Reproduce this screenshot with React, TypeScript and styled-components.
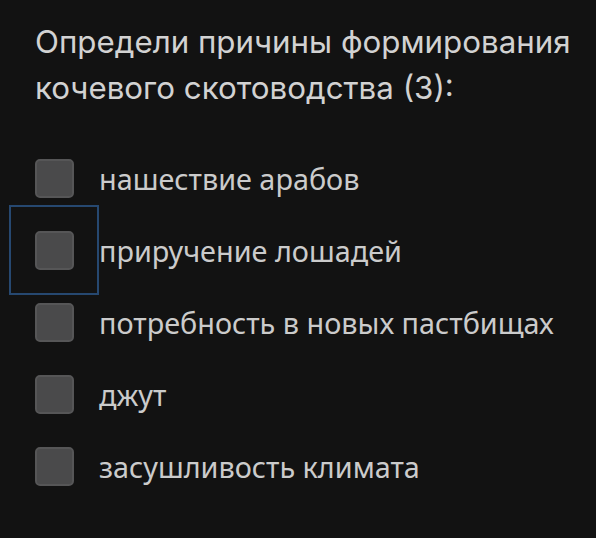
import styled, { createGlobalStyle } from "styled-components";

const GlobalStyle = createGlobalStyle`
  html, body {
    margin: 0;
    padding: 0;
    background: #121212;
  }
`;

const options = [
  { label: "нашествие арабов", focused: false },
  { label: "приручение лошадей", focused: true },
  { label: "потребность в новых пастбищах", focused: false },
  { label: "джут", focused: false },
  { label: "засушливость климата", focused: false },
];

export default function App() {
  return (
    <>
      <GlobalStyle />
      <Page>
        <Question>
          Определи причины формирования
          <br />
          кочевого скотоводства (3):
        </Question>
        <List>
          {options.map((o) => (
            <Row key={o.label}>
              <BoxCell $focused={o.focused}>
                <Box />
              </BoxCell>
              <Label>{o.label}</Label>
            </Row>
          ))}
        </List>
      </Page>
    </>
  );
}

const Page = styled.div`
  width: 596px;
  height: 538px;
  background: #121212;
  padding-top: 19px;
  box-sizing: border-box;
  overflow: hidden;
`;

const Question = styled.div`
  padding-left: 35px;
  font-family: Inter, "Noto Sans", sans-serif;
  font-size: 31.3px;
  line-height: 46px;
  color: #d2d2d2;
`;

const List = styled.div`
  margin-top: 31px;
  display: flex;
  flex-direction: column;
`;

const Row = styled.div`
  display: flex;
  align-items: center;
  height: 72px;
`;

const BoxCell = styled.div<{ $focused: boolean }>`
  position: relative;
  width: 90px;
  margin-left: 9px;
  height: 72px;
  display: flex;
  align-items: center;
  justify-content: center;

  &::after {
    content: "";
    display: ${(p) => (p.$focused ? "block" : "none")};
    position: absolute;
    left: 0;
    top: -9px;
    width: 90px;
    height: 90px;
    box-sizing: border-box;
    border: 2px solid #264870;
  }
`;

const Box = styled.div`
  width: 39px;
  height: 39px;
  box-sizing: border-box;
  border-radius: 5px;
  background: #4a4a4b;
  border: 2px solid #565657;
`;

const Label = styled.div`
  font-family: "Noto Sans", "Open Sans", sans-serif;
  font-size: 28.8px;
  color: #cbcbcb;
  white-space: nowrap;
`;
